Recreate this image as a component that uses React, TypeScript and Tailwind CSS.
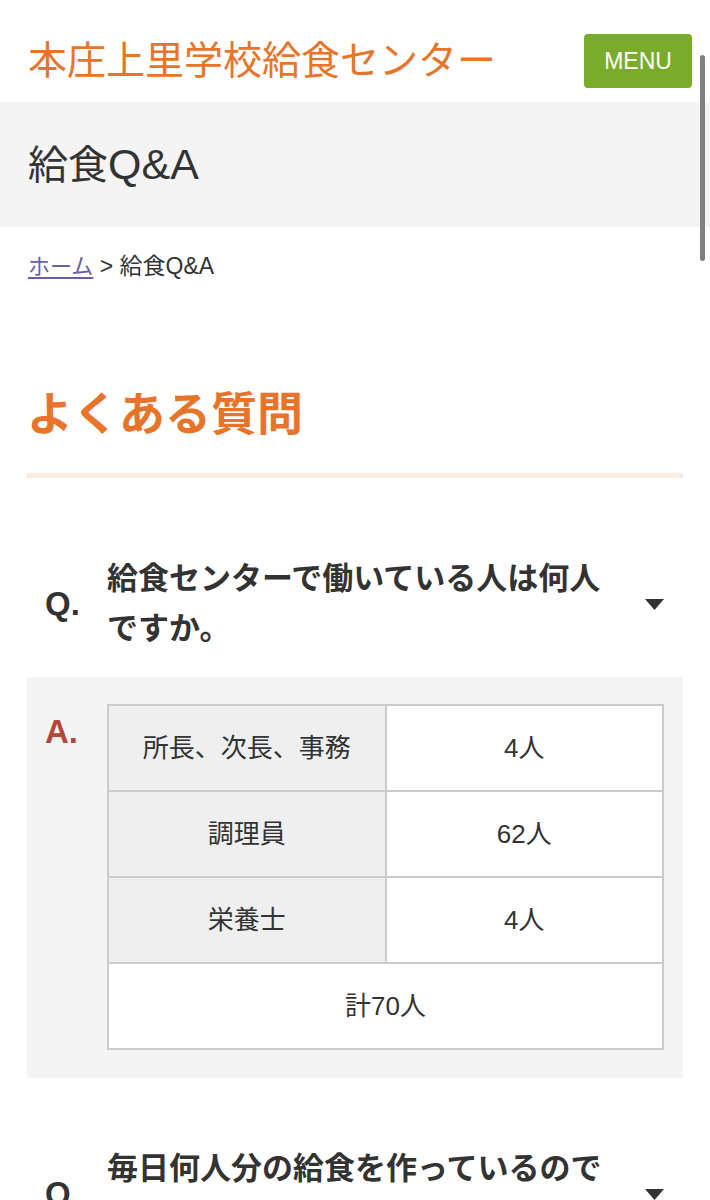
import { ReactNode } from "react";

const font = { fontFamily: '"Liberation Sans", "Noto Sans CJK JP", sans-serif' };

const staff = [
  { role: "所長、次長、事務", count: "4人" },
  { role: "調理員", count: "62人" },
  { role: "栄養士", count: "4人" },
];

function Caret() {
  return (
    <svg width="19" height="11" viewBox="0 0 19 11" className="shrink-0">
      <path d="M0 0 H19 L9.5 11 Z" fill="#333333" />
    </svg>
  );
}

function Question({ children }: { children: ReactNode }) {
  return (
    <div className="flex items-center pl-[18px] pr-[19px]">
      <span className="w-[62px] shrink-0 text-[33px] font-bold text-[#333333]">Q.</span>
      <p className="flex-1 text-[31px] font-bold leading-[50px] text-[#333333]">{children}</p>
      <Caret />
    </div>
  );
}

export default function App() {
  return (
    <div className="relative min-h-[1200px] overflow-hidden bg-white" style={font}>
      <header className="flex h-[102px] items-center justify-between pl-[28px] pr-[18px]">
        <h1 className="mt-[18px] text-[39px] leading-none text-[#e8742a]">
          本庄上里学校給食センター
        </h1>
        <button className="mt-[20px] h-[54px] w-[108px] rounded-[4px] bg-[#7aab2b] text-[23px] text-white">
          MENU
        </button>
      </header>

      <div className="flex h-[125px] items-center bg-[#f4f4f4] px-[28px]">
        <h2 className="text-[40px] text-[#333333]">
          給食<span className="text-[43px]">Q&amp;A</span>
        </h2>
      </div>

      <nav className="px-[28px] pt-[24px] text-[22px] leading-[30px] text-[#333333]">
        <a className="text-[#6a5fa6] underline underline-offset-[3px]">ホーム</a>
        <span className="text-[23px]"> &gt; 給食Q&amp;A</span>
      </nav>

      <main className="px-[27px]">
        <h3 className="mt-[109px] text-[46px] font-bold leading-none text-[#e8742a]">よくある質問</h3>
        <div className="mt-[36px] h-[5px] bg-[#fcebe1]" />

        <div className="mt-[76px]">
          <Question>
            給食センターで働いている人は何人
            <br />
            ですか。
          </Question>
        </div>

        <div className="mt-[23px] flex bg-[#f4f4f4] pb-[28px] pl-[18px] pr-[19px] pt-[27px]">
          <span className="mt-[8px] w-[62px] shrink-0 text-[33px] font-bold leading-[40px] text-[#b5473a]">A.</span>
          <table className="flex-1 border-collapse text-[26px] text-[#333333]">
            <tbody>
              {staff.map((s) => (
                <tr key={s.role} className="h-[86px]">
                  <td className="w-1/2 border-2 border-[#cccccc] bg-[#efefef] text-center">{s.role}</td>
                  <td className="w-1/2 border-2 border-[#cccccc] bg-white text-center">{s.count}</td>
                </tr>
              ))}
              <tr className="h-[86px]">
                <td colSpan={2} className="border-2 border-[#cccccc] bg-white text-center">
                  計70人
                </td>
              </tr>
            </tbody>
          </table>
        </div>

        <div className="mt-[66px]">
          <Question>
            毎日何人分の給食を作っているので
            <br />
            すか。
          </Question>
        </div>
      </main>

      <div className="absolute right-[5px] top-[55px] h-[206px] w-[5px] rounded-full bg-[#808080]" />
    </div>
  );
}
